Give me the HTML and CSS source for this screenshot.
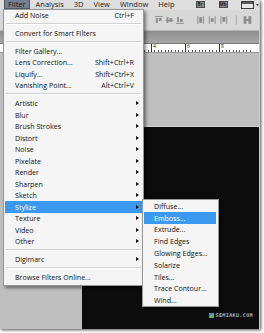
FILE: index.html
```html
<!DOCTYPE html>
<html lang="en">
<head>
    <meta charset="UTF-8">
    <title>Filter menu</title>
    <link rel="stylesheet" href="styles.css">
</head>
<body>
    <div class="screen">
        <!-- 菜单栏 -->
        <div class="menubar">
            <span class="mb-item open">Filter</span>
            <span class="mb-item">Analysis</span>
            <span class="mb-item">3D</span>
            <span class="mb-item">View</span>
            <span class="mb-item">Window</span>
            <span class="mb-item">Help</span>
            <span class="badge br">Br</span>
            <span class="badge">Mb</span>
            <svg class="mode" width="18" height="8" viewBox="0 0 18 8">
                <rect x="0.5" y="0.5" width="12" height="7" fill="#e8e8e8" stroke="#3c3c3c"/>
                <rect x="1" y="1" width="11" height="2" fill="#5a5a5a"/>
                <path d="M15 3h3l-1.5 2z" fill="#222"/>
            </svg>
        </div>

        <!-- 选项栏 -->
        <div class="options">
            <svg width="110" height="10" viewBox="0 0 110 10">
                <g fill="#8e8e8e">
                    <rect x="2" y="1" width="8" height="1"/><rect x="3" y="3" width="2" height="5"/><rect x="6" y="3" width="3" height="3"/>
                    <rect x="13" y="5" width="8" height="1"/><rect x="14" y="2" width="2" height="6"/><rect x="17" y="3" width="3" height="4"/>
                    <rect x="24" y="8" width="8" height="1"/><rect x="25" y="2" width="2" height="5"/><rect x="28" y="4" width="3" height="3"/>
                    <rect x="46" y="1" width="1" height="8"/><rect x="48" y="2" width="3" height="6"/><rect x="52" y="1" width="1" height="8"/>
                    <rect x="58" y="1" width="1" height="8"/><rect x="60" y="3" width="3" height="4"/><rect x="64" y="1" width="1" height="8"/>
                    <rect x="70" y="1" width="1" height="8"/><rect x="72" y="2" width="3" height="5"/><rect x="76" y="1" width="1" height="8"/>
                    <rect x="86" y="0" width="1" height="10" fill="#a8a8a8"/>
                    <rect x="94" y="1" width="3" height="8"/><rect x="99" y="1" width="3" height="8"/><rect x="96" y="4" width="4" height="2"/>
                </g>
            </svg>
        </div>

        <div class="tabs"></div>

        <!-- 标尺 -->
        <div class="ruler">
            <span class="mark">0</span>
            <span class="mark">2</span>
            <span class="mark">4</span>
            <span class="mark">6</span>
            <span class="mark">8</span>
        </div>

        <div class="workspace">
            <div class="canvas">
                <span class="watermark"><i class="wm-logo"></i>SEMIAKU.COM</span>
            </div>
        </div>

        <!-- Filter 菜单 -->
        <div class="menu">
            <div class="item">Add Noise<span class="key">Ctrl+F</span></div>
            <div class="sep"></div>
            <div class="item">Convert for Smart Filters</div>
            <div class="sep"></div>
            <div class="item">Filter Gallery...</div>
            <div class="item">Lens Correction...<span class="key">Shift+Ctrl+R</span></div>
            <div class="item">Liquify...<span class="key">Shift+Ctrl+X</span></div>
            <div class="item">Vanishing Point...<span class="key">Alt+Ctrl+V</span></div>
            <div class="sep"></div>
            <div class="item">Artistic<i class="arrow"></i></div>
            <div class="item">Blur<i class="arrow"></i></div>
            <div class="item">Brush Strokes<i class="arrow"></i></div>
            <div class="item">Distort<i class="arrow"></i></div>
            <div class="item">Noise<i class="arrow"></i></div>
            <div class="item">Pixelate<i class="arrow"></i></div>
            <div class="item">Render<i class="arrow"></i></div>
            <div class="item">Sharpen<i class="arrow"></i></div>
            <div class="item">Sketch<i class="arrow"></i></div>
            <div class="item hl">Stylize<i class="arrow"></i></div>
            <div class="item">Texture<i class="arrow"></i></div>
            <div class="item">Video<i class="arrow"></i></div>
            <div class="item">Other<i class="arrow"></i></div>
            <div class="sep"></div>
            <div class="item">Digimarc<i class="arrow"></i></div>
            <div class="sep"></div>
            <div class="item">Browse Filters Online...</div>
        </div>

        <!-- Stylize 子菜单 -->
        <div class="submenu">
            <div class="item">Diffuse...</div>
            <div class="item hl">Emboss...</div>
            <div class="item">Extrude...</div>
            <div class="item">Find Edges</div>
            <div class="item">Glowing Edges...</div>
            <div class="item">Solarize</div>
            <div class="item">Tiles...</div>
            <div class="item">Trace Contour...</div>
            <div class="item">Wind...</div>
        </div>
    </div>
</body>
</html>
```

FILE: styles.css
```css
*{margin: 0; padding: 0; box-sizing: border-box;}
body {width: 264px;height: 333px;overflow: hidden;background: #fff;font-family: "Open Sans", "Noto Sans", sans-serif;}
.screen {position: relative;width: 260px;height: 329px;display: flex;flex-direction: column;background: #d6d6d6;border-right: 1px solid #cfcfcf;box-shadow: 1px 1px 3px rgba(0,0,0,.7);overflow: hidden;}

.menubar {height: 10px;display: flex;align-items: flex-start;padding-left: 4px;background: #dedede;font-size: 7.5px;line-height: 9px;color: #1a1a1a;}
.mb-item {padding: 0 5px;height: 9px;}
.mb-item.open {padding: 0 3px;margin-right: 1px;background: #74808f;border: 1px solid #4f5966;border-top: 0;}
.badge {margin-top: 1px;margin-left: 14px;width: 9px;height: 7px;background: #8c8c8c;border: 1px solid #4a4a4a;font-size: 4.5px;line-height: 5px;text-align: center;color: #1e1e1e;font-weight: bold;}
.badge.br {margin-left: 16px;}
.mode {margin-top: 1px;margin-left: 13px;}

.options {height: 21px;display: flex;align-items: center;padding-left: 153px;background: #d8d8d8;border-bottom: 1px solid #b5b5b5;}

.tabs {height: 13px;background: linear-gradient(#8f8f8f, #a6a6a6);border-bottom: 1px solid #7a7a7a;}

.ruler {height: 9px;display: flex;padding-left: 83px;background: #fff;border-bottom: 1px solid #9a9a9a;}
.mark {flex: none;width: 34px;border-left: 1px solid #333;padding-left: 1px;font-size: 5px;line-height: 5px;color: #222;
    background-image: repeating-linear-gradient(to right, transparent 0 2.4px, #555 2.4px 3.4px);
    background-size: 100% 2px;background-repeat: no-repeat;background-position: 0 100%;}

.workspace {flex: 1;display: flex;padding: 73px 0 0 82px;background: #bfbfbf;}
.canvas {flex: 1;display: flex;align-items: flex-end;justify-content: flex-end;padding: 0 6px 11px 0;background: #0c0c0c;border-top: 1px solid #d4d4d4;}
.watermark {display: flex;align-items: center;gap: 1px;font-family: "DejaVu Sans Mono", monospace;font-size: 5px;letter-spacing: .4px;font-weight: bold;color: #b4b4b4;}
.wm-logo {width: 5px;height: 5px;background: linear-gradient(135deg, #3f8fd8 50%, #5db84a 50%);}

.menu {position: absolute;left: 3px;top: 9px;width: 141px;padding-bottom: 2px;background: #f5f5f5;border: 1px solid #979797;box-shadow: 2px 2px 3px rgba(0,0,0,.45);font-size: 7.1px;color: #111;}
.item {display: flex;align-items: center;height: 11.5px;margin: 0 1px;padding: 0 3px 0 10px;white-space: nowrap;}
.item.hl {background: #3b99f2;color: #fff;}
.key {margin-left: auto;margin-right: 5px;}
.arrow {margin-left: auto;border-left: 3px solid #111;border-top: 2.5px solid transparent;border-bottom: 2.5px solid transparent;}
.sep {height: 6.5px;display: flex;align-items: center;margin: 0 2px;}
.sep::before {content: "";flex: 1;border-top: 1px solid #d2d2d2;border-bottom: 1px solid #fff;}
.menu .item:first-child {height: 10.5px;}

.submenu {position: absolute;left: 142px;top: 199px;width: 77px;background: #f5f5f5;border: 1px solid #979797;box-shadow: 2px 2px 3px rgba(0,0,0,.45);font-size: 7.1px;color: #111;}
.submenu .item {height: 11.8px;margin: 0 2px 0 1px;}
```
